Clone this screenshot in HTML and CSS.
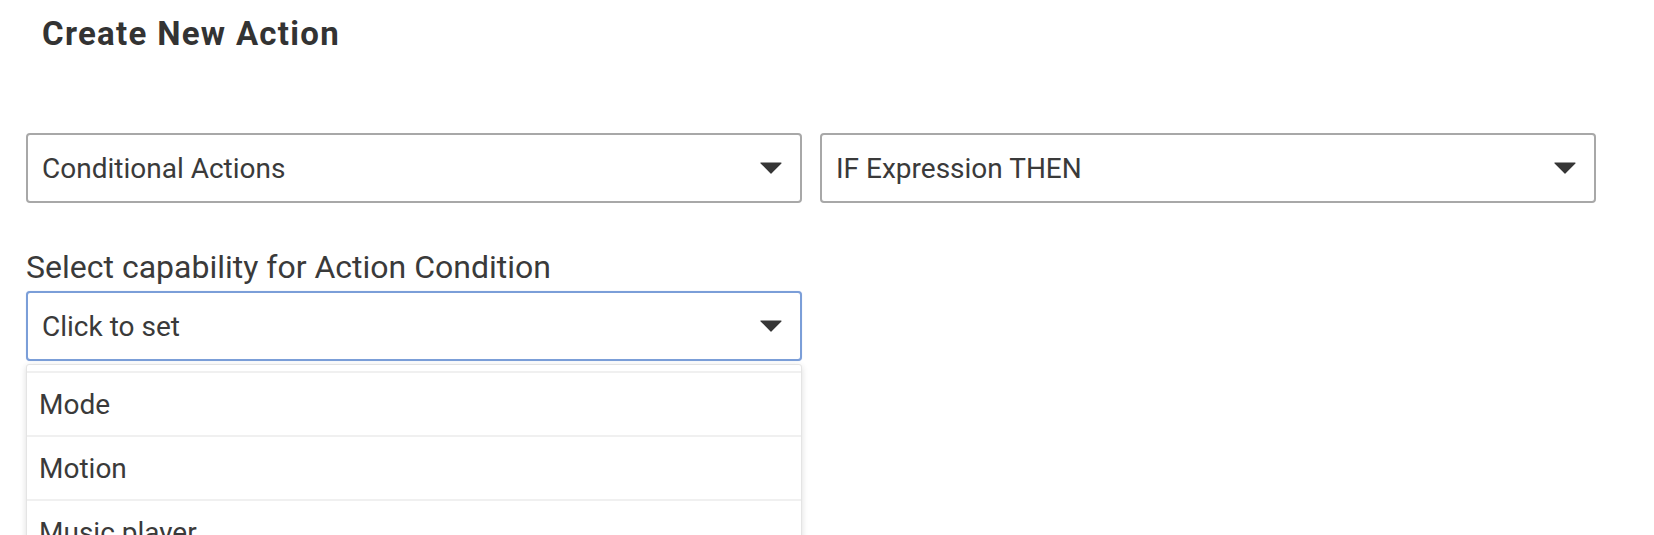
FILE: index.html
```html
<!DOCTYPE html>
<html lang="en">
<head>
<meta charset="utf-8">
<title>Create New Action</title>
<link rel="stylesheet" href="styles.css">
</head>
<body>
<div class="page">
  <h1 class="title">Create New Action</h1>
  <div class="grid">
    <div class="select">
      <span class="value">Conditional Actions</span>
      <svg class="caret" width="22" height="12" viewBox="0 0 22 12"><path d="M1 1 H21 L11 11 Z" fill="#363636" stroke="#363636" stroke-width="1.2" stroke-linejoin="round"/></svg>
    </div>
    <div class="select">
      <span class="value">IF Expression THEN</span>
      <svg class="caret" width="22" height="12" viewBox="0 0 22 12"><path d="M1 1 H21 L11 11 Z" fill="#363636" stroke="#363636" stroke-width="1.2" stroke-linejoin="round"/></svg>
    </div>
    <div class="field">
      <div class="label">Select capability for Action Condition</div>
      <div class="select focused">
        <span class="value">Click to set</span>
        <svg class="caret" width="22" height="12" viewBox="0 0 22 12"><path d="M1 1 H21 L11 11 Z" fill="#363636" stroke="#363636" stroke-width="1.2" stroke-linejoin="round"/></svg>
      </div>
      <div class="menu">
        <div class="peek"></div>
        <div class="item">Mode</div>
        <div class="item">Motion</div>
        <div class="item">Music player</div>
      </div>
    </div>
  </div>
</div>
</body>
</html>
```

FILE: styles.css
```css
html, body {
  margin: 0;
  padding: 0;
  background: #ffffff;
  overflow: hidden;
}

.page {
  padding: 16px 58px 0 26px;
  font-family: Roboto, "Liberation Sans", Arial, sans-serif;
  color: #3a3a3a;
}

.title {
  margin: 0;
  padding-left: 16px;
  font-size: 33px;
  line-height: 36px;
  font-weight: 700;
  color: #333333;
  letter-spacing: 1.3px;
}

.grid {
  margin-top: 81px;
  display: grid;
  grid-template-columns: 1fr 1fr;
  column-gap: 18px;
  row-gap: 45px;
}

.select {
  box-sizing: border-box;
  height: 70px;
  border: 2px solid #a8a8a8;
  border-radius: 4px;
  display: flex;
  align-items: center;
  justify-content: space-between;
  padding: 0 18px 0 14px;
  background: #ffffff;
}

.select.focused {
  border-color: #7b9ed8;
  box-shadow: 0 0 1px rgba(90, 130, 210, 0.4);
}

.value {
  font-size: 28px;
  color: #3a3a3a;
}

.caret {
  display: block;
  flex: none;
}

.field {
  display: flex;
  flex-direction: column;
}

.label {
  font-size: 32px;
  color: #3a3a3a;
  margin-bottom: 5px;
}

.menu {
  margin-top: 3px;
  height: 180px;
  overflow: hidden;
  border: 1px solid #e4e4e4;
  border-radius: 3px;
  box-shadow: 0 2px 6px rgba(0, 0, 0, 0.14);
  background: #ffffff;
}

.peek {
  height: 6px;
  border-bottom: 2px solid #f0f0f0;
}

.item {
  box-sizing: border-box;
  height: 64px;
  display: flex;
  align-items: center;
  padding-left: 12px;
  font-size: 28px;
  color: #3a3a3a;
  border-bottom: 2px solid #f0f0f0;
}
```
